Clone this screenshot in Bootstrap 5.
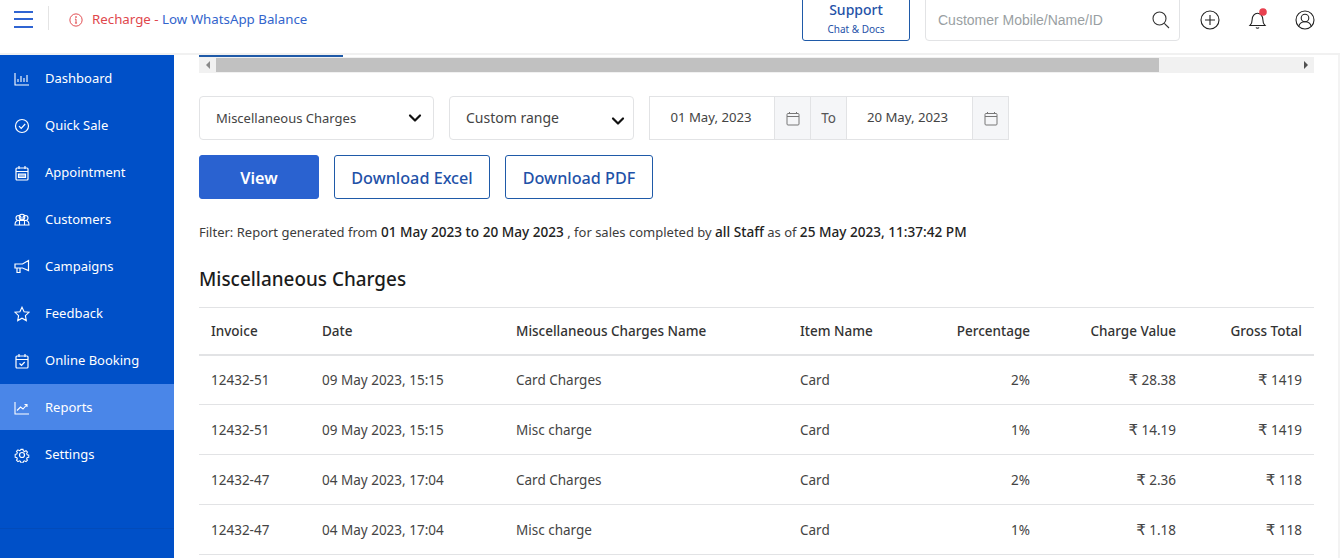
<!DOCTYPE html>
<html lang="en">
<head>
<meta charset="utf-8">
<title>Reports</title>
<link href="https://cdn.jsdelivr.net/npm/bootstrap@5.3.0/dist/css/bootstrap.min.css" rel="stylesheet">
<style>
html,body{height:558px;overflow:hidden}
body{font-family:"Noto Sans","Open Sans",sans-serif;font-size:13px;color:#333;background:#fff}
.top-bar{height:55px;border-bottom:2px solid #f1f1f1;padding:0 25px 12px 14px;overflow:hidden}
.burger{width:19px;height:17px;display:flex;flex-direction:column;justify-content:space-between;margin-bottom:3px}
.burger span{display:block;height:2px;background:#2f64d2}
.vsep{width:1px;height:24px;background:#e4e4e4;margin:0 20px 0 15px;align-self:center;position:relative;top:-3px}
.alert-line{font-size:13.3px;align-self:center;gap:9px;position:relative;top:-1px}
.txt-red{color:#e0474c}.txt-blue{color:#3264cc}
.support-btn{width:108px;height:54px;border:1px solid #1f5aa8;border-radius:3px;color:#1f52a8;line-height:1.2;text-align:center;padding-top:14px;background:#fff}
.support-btn b{display:block;font-size:14px;font-weight:500}
.support-btn small{display:block;font-size:10px;margin-top:4px}
.search-box{width:255px;height:54px;border:1px solid #e2e3e5;border-radius:4px;margin-left:15px;padding:22px 9px 0 12px;font-family:"Liberation Sans",sans-serif;font-size:14px;color:#9a9fa3}
.search-box svg{margin-top:1px}
.top-ico{line-height:0;position:relative;top:-11px}
.ico-a{margin-left:20px}.ico-b{margin-left:27px}.ico-c{margin-left:26px}
.page-wrap{height:503px}
.side-nav{width:174px;background:#0050c8;flex:none;height:503px;position:relative}
.side-nav a{display:flex;align-items:center;height:47px;color:#fff;text-decoration:none;font-size:13px;padding:1px 0 0 14px;gap:15px}
.side-nav a.on{background:#4a86e8;height:46px;padding-top:2px}
.side-nav a.on + a{padding-top:3px}
.side-nav a svg{flex:none;width:16px;height:16px}
.side-foot{position:absolute;left:0;right:0;top:473px;height:1px;background:#024bba}
.main-pane{flex:1;padding:0 24px 0 25px;overflow:hidden;border-right:2px solid #f3f3f3}
.tab-line{width:144px;height:2px;background:#1f5aa8}
.fake-scroll{height:16px;background:#f1f1f1;display:flex;align-items:center;margin-bottom:23px}
.fake-scroll i{flex:none;width:17px;display:flex;justify-content:center;font-style:normal}
.scroll-thumb{width:943px;height:14px;background:#c1c1c1}
.scroll-rest{flex:1}
.arrow-l{width:0;height:0;border:4px solid transparent;border-right-color:#8a8a8a;border-left:0}
.arrow-r{width:0;height:0;border:4px solid transparent;border-left-color:#505050;border-right:0}
.filters{gap:15px;margin-bottom:15px}
.form-select.sel-a,.form-select.sel-b{height:44px;color:#444;border-color:#e2e3e5;border-radius:4px;background-size:14px 10px;background-image:url("data:image/svg+xml,%3csvg xmlns='http://www.w3.org/2000/svg' viewBox='0 0 14 10'%3e%3cpath fill='none' stroke='%23111' stroke-width='2.200' stroke-linecap='round' stroke-linejoin='round' d='M2 2.500l5 5 5-5'/%3e%3c/svg%3e")}
.form-select.sel-a{width:235px;font-size:13px;padding:8px 36px 6px 16px;background-position:right 11px top 16px}
.form-select.sel-b{width:185px;font-size:14px;padding:5px 36px 7px 16px;background-position:right 8px top 19px}
.date-grp{width:360px;height:44px;flex-wrap:nowrap}
.date-grp .form-control{flex:none;height:44px;text-align:center;font-size:13.2px;color:#444;border-color:#e2e3e5;border-radius:0;padding:0 0 2px}
.date-grp .inp-a{width:126px;padding-right:2px}
.date-grp .inp-b{width:127px;padding-right:4px}
.date-grp .input-group-text{width:37px;justify-content:center;padding:0;background:#f5f6f8;border-color:#e2e3e5;border-radius:0;font-size:13.5px;color:#555}
.act-row{gap:15px;margin-bottom:24px}
.act-row .btn{height:44px;font-size:16.2px;font-weight:500;border-radius:3px;padding:2px 0 0;display:flex;align-items:center;justify-content:center}
.btn-run{width:120px;background:#2a62d0;border-color:#2a62d0;color:#fff;font-weight:600!important}
.btn-line{background:#fff;border-color:#1f5aa8;color:#1f52a8}
.w-excel{width:156px}.w-pdf{width:148px}
.filter-note{font-size:13px;line-height:18px;margin-bottom:25px;color:#3c3c3c}
.filter-note b{font-weight:500;font-size:13.6px;color:#222}
.sec-title{font-size:18.9px;font-weight:500;color:#1c1c1c;line-height:26px;margin-bottom:15px}
.data-table{table-layout:fixed;width:1115px;margin:0;font-size:13.5px;color:#444;border-top:1px solid #e2e3e5}
.data-table th{font-weight:500;font-size:13.5px;color:#333;height:47px;padding:0 12px;vertical-align:middle;border-bottom:2px solid #e2e3e5}
.data-table td{height:50px;padding:1px 12px 0;vertical-align:middle;color:#444;border-bottom:1px solid #e2e3e5}
.data-table tbody tr:first-child td{padding-top:0}
.rupee{font-family:"DejaVu Sans",sans-serif;font-size:15px;line-height:1}
</style>
</head>
<body>
<header class="top-bar d-flex align-items-end">
  <div class="burger align-self-center" aria-label="Menu"><span></span><span></span><span></span></div>
  <div class="vsep"></div>
  <div class="alert-line d-flex align-items-center">
    <svg width="14" height="14" viewBox="0 0 16 16" fill="none" stroke="#e0474c" stroke-width="1.1"><circle cx="8" cy="8" r="7"/><path d="M8 7v4.500M6.800 11.500h2.400M6.800 7H8"/><circle cx="8" cy="4.600" r=".5" fill="#e0474c"/></svg>
    <span><span class="txt-red">Recharge -</span> <span class="txt-blue">Low WhatsApp Balance</span></span>
  </div>
  <div class="ms-auto support-btn"><b>Support</b><small>Chat &amp; Docs</small></div>
  <div class="search-box d-flex justify-content-between align-items-start">
    <span>Customer Mobile/Name/ID</span>
    <svg width="18" height="18" viewBox="0 0 18 18" fill="none" stroke="#333" stroke-width="1.1"><circle cx="7.500" cy="7.500" r="6.500"/><path d="M12.300 12.300 17 17"/></svg>
  </div>
  <div class="top-ico ico-a"><svg width="20" height="20" viewBox="0 0 20 20" fill="none" stroke="#222" stroke-width="1.1"><circle cx="10" cy="10" r="9"/><path d="M10 5v10M5 10h10"/></svg></div>
  <div class="top-ico ico-b"><svg width="22" height="22" viewBox="0 0 22 22" fill="none" stroke="#222" stroke-width="1.1"><path d="M3 17.500c1.600-1.600 2.200-3 2.200-6.200 0-3.400 2.300-6 5.300-6s5.300 2.600 5.300 6c0 3.200.6 4.600 2.200 6.200z"/><path d="M9 19.500c.6 1 2.400 1 3 0"/><circle cx="16" cy="4" r="3.800" fill="#e8414f" stroke="none"/></svg></div>
  <div class="top-ico ico-c"><svg width="20" height="20" viewBox="0 0 20 20" fill="none" stroke="#222" stroke-width="1.1"><circle cx="10" cy="10" r="9"/><circle cx="10" cy="8" r="3.800"/><path d="M3.800 16.300c.8-3 3.200-4.500 6.200-4.500s5.400 1.500 6.200 4.500"/></svg></div>
</header>
<div class="page-wrap d-flex">
  <nav class="side-nav">
    <a href="#"><svg viewBox="0 0 16 16" fill="none" stroke="#fff" stroke-width="1.100"><path d="M1 2v12h14M4 11V8M7 11V5M10 11V7M13 11V4"/></svg>Dashboard</a>
    <a href="#"><svg viewBox="0 0 16 16" fill="none" stroke="#fff" stroke-width="1.200"><circle cx="8" cy="8" r="6.500"/><path d="M5 8.200l2.200 2.200L11.200 6"/></svg>Quick Sale</a>
    <a href="#"><svg viewBox="0 0 16 16" fill="none" stroke="#fff" stroke-width="1.200"><rect x="2" y="3" width="12" height="12" rx="1"/><path d="M2 6.500h12M5 1v3M11 1v3"/><path d="M4.500 9h7v3.500h-7z" fill="#fff" fill-opacity=".6"/></svg>Appointment</a>
    <a href="#"><svg viewBox="0 0 16 16" fill="none" stroke="#fff" stroke-width="1.100"><circle cx="4.500" cy="6" r="2.500"/><circle cx="8" cy="5" r="2.800"/><circle cx="11.500" cy="6" r="2.500"/><path d="M1 13c0-3 1.500-4.500 3.500-4.500h7c2 0 3.500 1.500 3.500 4.500zM5.500 13V9M10.500 13V9"/></svg>Customers</a>
    <a href="#"><svg viewBox="0 0 16 16" fill="none" stroke="#fff" stroke-width="1.200"><path d="M1 5h7.500L14.500 1.500v10L8.500 9H1zM3 9v4.500h3V9"/></svg>Campaigns</a>
    <a href="#"><svg viewBox="0 0 16 16" fill="none" stroke="#fff" stroke-width="1.100"><path d="M8 1.200l2.100 4.500 4.900.6-3.600 3.400.9 4.900L8 12.200l-4.300 2.400.9-4.900L1 6.300l4.900-.6z"/></svg>Feedback</a>
    <a href="#"><svg viewBox="0 0 16 16" fill="none" stroke="#fff" stroke-width="1.200"><rect x="2" y="3" width="12" height="12" rx="1"/><path d="M2 6.500h12M5 1v3M11 1v3M5.500 10.500l2 1.800 3.200-3.300"/></svg>Online Booking</a>
    <a href="#" class="on"><svg viewBox="0 0 16 16" fill="none" stroke="#fff" stroke-width="1.100"><path d="M1 2v12h14M3 10.500l3.500-3.500 2.500 2 4-4.500M10.500 4.500H13V7"/></svg>Reports</a>
    <a href="#"><svg viewBox="0 0 16 16" fill="none" stroke="#fff" stroke-width="1.200"><circle cx="8" cy="8" r="2.500"/><path d="M6.800 1.500h2.400l.4 1.800 1.500.7 1.600-1 1.700 1.700-1 1.600.7 1.500 1.800.4v2.400l-1.800.4-.7 1.500 1 1.600-1.700 1.700-1.600-1-1.500.7-.4 1.800H6.800l-.4-1.800-1.500-.7-1.600 1-1.700-1.700 1-1.600-.7-1.500-1.800-.4V7.200l1.800-.4.700-1.500-1-1.600 1.700-1.700 1.600 1 1.500-.7z" transform="translate(1.100 1.100) scale(.86)"/></svg>Settings</a>
    <div class="side-foot"></div>
  </nav>
  <main class="main-pane">
    <div class="tab-line"></div>
    <div class="fake-scroll"><i><span class="arrow-l"></span></i><div class="scroll-thumb"></div><div class="scroll-rest"></div><i><span class="arrow-r"></span></i></div>
    <div class="filters d-flex">
      <select class="form-select sel-a"><option>Miscellaneous Charges</option></select>
      <select class="form-select sel-b"><option>Custom range</option></select>
      <div class="input-group date-grp">
        <input class="form-control inp-a" value="01 May, 2023">
        <span class="input-group-text"><svg width="14" height="15" viewBox="0 0 14 15" fill="none" stroke="#777"><rect x="1" y="2.500" width="12" height="11.500" rx="1"/><path d="M1 5.500h12M3.500 1v2M10.500 1v2"/></svg></span>
        <span class="input-group-text">To</span>
        <input class="form-control inp-b" value="20 May, 2023">
        <span class="input-group-text"><svg width="14" height="15" viewBox="0 0 14 15" fill="none" stroke="#777"><rect x="1" y="2.500" width="12" height="11.500" rx="1"/><path d="M1 5.500h12M3.500 1v2M10.500 1v2"/></svg></span>
      </div>
    </div>
    <div class="act-row d-flex">
      <button class="btn btn-run">View</button>
      <button class="btn btn-line w-excel">Download Excel</button>
      <button class="btn btn-line w-pdf">Download PDF</button>
    </div>
    <p class="filter-note">Filter: Report generated from <b>01 May 2023 to 20 May 2023</b> , for sales completed by <b>all Staff</b> as of <b>25 May 2023, 11:37:42 PM</b></p>
    <h2 class="sec-title">Miscellaneous Charges</h2>
    <table class="table data-table">
      <colgroup><col style="width:111px"><col style="width:194px"><col style="width:284px"><col style="width:130px"><col style="width:124px"><col style="width:146px"><col style="width:126px"></colgroup>
      <thead><tr><th>Invoice</th><th>Date</th><th>Miscellaneous Charges Name</th><th>Item Name</th><th class="text-end">Percentage</th><th class="text-end">Charge Value</th><th class="text-end">Gross Total</th></tr></thead>
      <tbody>
        <tr><td>12432-51</td><td>09 May 2023, 15:15</td><td>Card Charges</td><td>Card</td><td class="text-end">2%</td><td class="text-end"><span class="rupee">₹</span> 28.38</td><td class="text-end"><span class="rupee">₹</span> 1419</td></tr>
        <tr><td>12432-51</td><td>09 May 2023, 15:15</td><td>Misc charge</td><td>Card</td><td class="text-end">1%</td><td class="text-end"><span class="rupee">₹</span> 14.19</td><td class="text-end"><span class="rupee">₹</span> 1419</td></tr>
        <tr><td>12432-47</td><td>04 May 2023, 17:04</td><td>Card Charges</td><td>Card</td><td class="text-end">2%</td><td class="text-end"><span class="rupee">₹</span> 2.36</td><td class="text-end"><span class="rupee">₹</span> 118</td></tr>
        <tr><td>12432-47</td><td>04 May 2023, 17:04</td><td>Misc charge</td><td>Card</td><td class="text-end">1%</td><td class="text-end"><span class="rupee">₹</span> 1.18</td><td class="text-end"><span class="rupee">₹</span> 118</td></tr>
      </tbody>
    </table>
  </main>
</div>
<script src="https://cdn.jsdelivr.net/npm/bootstrap@5.3.0/dist/js/bootstrap.bundle.min.js"></script>
</body>
</html>
